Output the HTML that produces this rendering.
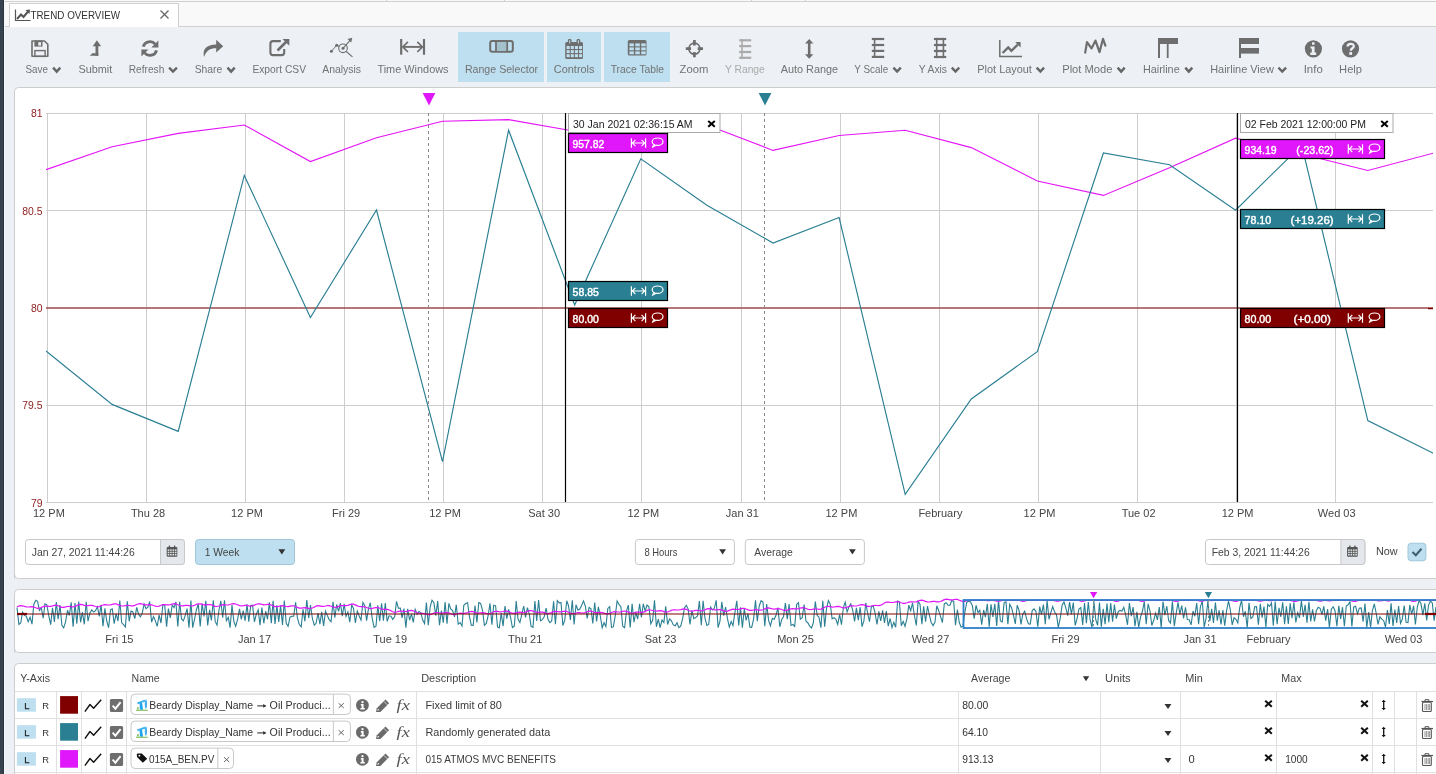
<!DOCTYPE html>
<html><head><meta charset="utf-8"><style>
html,body{margin:0;padding:0;width:1436px;height:774px;overflow:hidden;background:#edf0f5}
svg{display:block;font-family:"Liberation Sans", sans-serif;will-change:transform}
</style></head><body>
<svg width="1436" height="774" viewBox="0 0 1436 774">
<rect x="0" y="0" width="1436" height="774" fill="#edf0f5" stroke="none" stroke-width="1" rx="0" />
<rect x="0" y="0" width="1436" height="26" fill="#f9f9f9" stroke="none" stroke-width="1" rx="0" />
<line x1="0" y1="1.5" x2="1436" y2="1.5" stroke="#d0d0d0" stroke-width="1" />
<line x1="386.5" y1="0" x2="386.5" y2="1" stroke="#d0d0d0" stroke-width="1" />
<line x1="504.5" y1="0" x2="504.5" y2="1" stroke="#d0d0d0" stroke-width="1" />
<line x1="751.5" y1="0" x2="751.5" y2="1" stroke="#d0d0d0" stroke-width="1" />
<line x1="805.5" y1="0" x2="805.5" y2="1" stroke="#d0d0d0" stroke-width="1" />
<line x1="0" y1="26.5" x2="1436" y2="26.5" stroke="#cfcfcf" stroke-width="1" />
<path d="M9.5,26.5 V3.5 H178.5 V26.5" fill="#fff" stroke="#cfcfcf" stroke-width="1" />
<rect x="10" y="25" width="168" height="3" fill="#edf0f5" stroke="none" stroke-width="1" rx="0" />
<rect x="10" y="4" width="168" height="23" fill="#fff" stroke="none" stroke-width="1" rx="0" />
<path d="M15.5,9.5 V20.5 H30.5" fill="none" stroke="#555" stroke-width="1.2" />
<path d="M17,19 L21,14.5 L23.5,17 L28.5,11" fill="none" stroke="#555" stroke-width="2" />
<path d="M25.5,10 L30,9.5 L29.5,14 Z" fill="#555" stroke="none" stroke-width="1" />
<text x="30.5" y="19.3" font-size="11.2" fill="#333" font-weight="normal" text-anchor="start" textLength="89.5" lengthAdjust="spacingAndGlyphs" >TREND OVERVIEW</text>
<path d="M160.5,10.5 L168.5,18.5 M168.5,10.5 L160.5,18.5" fill="none" stroke="#666" stroke-width="1.3" />
<rect x="0" y="0" width="3" height="774" fill="#36434f" stroke="none" stroke-width="1" rx="0" />
<rect x="3" y="0" width="1" height="774" fill="#2a3542" stroke="none" stroke-width="1" rx="0" />
<rect x="4" y="0" width="1" height="774" fill="#f4f6f9" stroke="none" stroke-width="1" rx="0" />
<rect x="458" y="32" width="86" height="50" fill="#bddfef" stroke="none" stroke-width="1" rx="0" />
<rect x="547" y="32" width="54" height="50" fill="#bddfef" stroke="none" stroke-width="1" rx="0" />
<rect x="604" y="32" width="66" height="50" fill="#bddfef" stroke="none" stroke-width="1" rx="0" />
<text x="25.4" y="72.7" font-size="10.6" fill="#727272" font-weight="normal" text-anchor="start" textLength="22.5" lengthAdjust="spacingAndGlyphs" >Save</text>
<path d="M53.1,67.6 L56.7,71.6 L60.3,67.6" fill="none" stroke="#666" stroke-width="2.4" />
<text x="78.4" y="72.7" font-size="10.6" fill="#727272" font-weight="normal" text-anchor="start" textLength="33.9" lengthAdjust="spacingAndGlyphs" >Submit</text>
<text x="128.7" y="72.7" font-size="10.6" fill="#727272" font-weight="normal" text-anchor="start" textLength="35.6" lengthAdjust="spacingAndGlyphs" >Refresh</text>
<path d="M169.1,67.6 L173.0,71.6 L176.9,67.6" fill="none" stroke="#666" stroke-width="2.4" />
<text x="194.7" y="72.7" font-size="10.6" fill="#727272" font-weight="normal" text-anchor="start" textLength="27.6" lengthAdjust="spacingAndGlyphs" >Share</text>
<path d="M227.5,67.6 L231.10000000000002,71.6 L234.70000000000002,67.6" fill="none" stroke="#666" stroke-width="2.4" />
<text x="252.4" y="72.7" font-size="10.6" fill="#727272" font-weight="normal" text-anchor="start" textLength="53.6" lengthAdjust="spacingAndGlyphs" >Export CSV</text>
<text x="322.2" y="72.7" font-size="10.6" fill="#727272" font-weight="normal" text-anchor="start" textLength="38.9" lengthAdjust="spacingAndGlyphs" >Analysis</text>
<text x="377.4" y="72.7" font-size="10.6" fill="#727272" font-weight="normal" text-anchor="start" textLength="71.2" lengthAdjust="spacingAndGlyphs" >Time Windows</text>
<text x="464.9" y="72.7" font-size="10.6" fill="#727272" font-weight="normal" text-anchor="start" textLength="73.2" lengthAdjust="spacingAndGlyphs" >Range Selector</text>
<text x="553.8" y="72.7" font-size="10.6" fill="#727272" font-weight="normal" text-anchor="start" textLength="40.7" lengthAdjust="spacingAndGlyphs" >Controls</text>
<text x="610.7" y="72.7" font-size="10.6" fill="#727272" font-weight="normal" text-anchor="start" textLength="53.4" lengthAdjust="spacingAndGlyphs" >Trace Table</text>
<text x="679.6" y="72.7" font-size="10.6" fill="#727272" font-weight="normal" text-anchor="start" textLength="28.8" lengthAdjust="spacingAndGlyphs" >Zoom</text>
<text x="725.0" y="72.7" font-size="10.6" fill="#aaa" font-weight="normal" text-anchor="start" textLength="39.8" lengthAdjust="spacingAndGlyphs" >Y Range</text>
<text x="780.7" y="72.7" font-size="10.6" fill="#727272" font-weight="normal" text-anchor="start" textLength="57.5" lengthAdjust="spacingAndGlyphs" >Auto Range</text>
<text x="854.3" y="72.7" font-size="10.6" fill="#727272" font-weight="normal" text-anchor="start" textLength="33.9" lengthAdjust="spacingAndGlyphs" >Y Scale</text>
<path d="M893.4,67.6 L897.0999999999999,71.6 L900.8,67.6" fill="none" stroke="#666" stroke-width="2.4" />
<text x="918.7" y="72.7" font-size="10.6" fill="#727272" font-weight="normal" text-anchor="start" textLength="28.3" lengthAdjust="spacingAndGlyphs" >Y Axis</text>
<path d="M951.8000000000001,67.6 L955.5,71.6 L959.1999999999999,67.6" fill="none" stroke="#666" stroke-width="2.4" />
<text x="977.3" y="72.7" font-size="10.6" fill="#727272" font-weight="normal" text-anchor="start" textLength="54.6" lengthAdjust="spacingAndGlyphs" >Plot Layout</text>
<path d="M1036.6999999999998,67.6 L1040.4,71.6 L1044.1000000000001,67.6" fill="none" stroke="#666" stroke-width="2.4" />
<text x="1062.2" y="72.7" font-size="10.6" fill="#727272" font-weight="normal" text-anchor="start" textLength="50.3" lengthAdjust="spacingAndGlyphs" >Plot Mode</text>
<path d="M1117.6,67.6 L1121.15,71.6 L1124.7,67.6" fill="none" stroke="#666" stroke-width="2.4" />
<text x="1142.9" y="72.7" font-size="10.6" fill="#727272" font-weight="normal" text-anchor="start" textLength="36.8" lengthAdjust="spacingAndGlyphs" >Hairline</text>
<path d="M1185.3,67.6 L1188.8000000000002,71.6 L1192.3000000000002,67.6" fill="none" stroke="#666" stroke-width="2.4" />
<text x="1210.2" y="72.7" font-size="10.6" fill="#727272" font-weight="normal" text-anchor="start" textLength="63.6" lengthAdjust="spacingAndGlyphs" >Hairline View</text>
<path d="M1278.3999999999999,67.6 L1282.25,71.6 L1286.1000000000001,67.6" fill="none" stroke="#666" stroke-width="2.4" />
<text x="1303.7" y="72.7" font-size="10.6" fill="#727272" font-weight="normal" text-anchor="start" textLength="19.1" lengthAdjust="spacingAndGlyphs" >Info</text>
<text x="1339.1" y="72.7" font-size="10.6" fill="#727272" font-weight="normal" text-anchor="start" textLength="22.9" lengthAdjust="spacingAndGlyphs" >Help</text>
<path d="M32,41 H44.5 L47.8,44.3 V56.2 H32 Z" fill="none" stroke="#6e6e6e" stroke-width="1.6" stroke-linejoin="round"/>
<rect x="34.4" y="40.5" width="8.1" height="6.1" fill="#6e6e6e" stroke="none" stroke-width="1" rx="0" />
<rect x="38.3" y="42.2" width="2.7" height="3.4" fill="#edf0f5" stroke="none" stroke-width="1" rx="0" />
<rect x="34.9" y="50.6" width="10.2" height="5.8" fill="none" stroke="#6e6e6e" stroke-width="1.4" rx="0" />
<path d="M92.7,46.2 L96.9,40.3 L101.1,46.2 Z" fill="#6e6e6e" stroke="none" stroke-width="1" />
<rect x="95.5" y="46" width="2.8" height="9.7" fill="#6e6e6e" stroke="none" stroke-width="1" rx="0" />
<path d="M89.8,55.7 L92.3,53.2 H98.3 V55.7 Z" fill="#6e6e6e" stroke="none" stroke-width="1" />
<path d="M143.24,46.71 A6.9,6.9 0 0 1 155.19,44.06" fill="none" stroke="#6e6e6e" stroke-width="2.8" />
<path d="M158.4,40.6 V47.6 H151.4 Z" fill="#6e6e6e" stroke="none" stroke-width="1" />
<path d="M156.56,50.29 A6.9,6.9 0 0 1 144.61,52.94" fill="none" stroke="#6e6e6e" stroke-width="2.8" />
<path d="M141.4,56.4 V49.4 H148.4 Z" fill="#6e6e6e" stroke="none" stroke-width="1" />
<path d="M204.2,57 C201.8,49.5 206.5,44.4 216.2,44.4 V39.7 L223.2,46.2 L216.2,52.6 V48.2 C210,48.2 206,50.5 204.2,57 Z" fill="#6e6e6e" stroke="none" stroke-width="1" />
<path d="M280.8,41.1 H273 A2.6,2.6 0 0 0 270.4,43.7 V52.5 A2.6,2.6 0 0 0 273,55.1 H281.6 A2.6,2.6 0 0 0 284.2,52.5 V49" fill="none" stroke="#6e6e6e" stroke-width="2.1" />
<path d="M277.5,50.5 L286,42" fill="none" stroke="#6e6e6e" stroke-width="2.6" />
<path d="M282.5,39 H289.3 V45.8 Z" fill="#6e6e6e" stroke="none" stroke-width="1" />
<circle cx="331.4" cy="51.3" r="1.5" fill="#6e6e6e"/><circle cx="336.7" cy="45.3" r="1.5" fill="#6e6e6e"/>
<path d="M331.4,51.3 L336.7,45.3 L339.5,46.5" fill="none" stroke="#6e6e6e" stroke-width="1" />
<circle cx="343" cy="48.3" r="4.3" fill="none" stroke="#6e6e6e" stroke-width="1.1"/><circle cx="343" cy="48.3" r="1.5" fill="#6e6e6e"/>
<path d="M343,48.3 L350.5,39.8" fill="none" stroke="#6e6e6e" stroke-width="1.1" />
<path d="M347.5,39 L352.3,37.8 L351.2,42.6 Z" fill="#6e6e6e" stroke="none" stroke-width="1" />
<path d="M346.2,51.5 L352.5,56.8" fill="none" stroke="#6e6e6e" stroke-width="1.1" />
<path d="M401.2,39 V54.7 M424,39 V54.7" fill="none" stroke="#6e6e6e" stroke-width="2.2" />
<path d="M403,46.9 H422.2" fill="none" stroke="#6e6e6e" stroke-width="1.9" />
<path d="M407.9,41.8 L402.8,46.9 L407.9,52 M417.3,41.8 L422.4,46.9 L417.3,52" fill="none" stroke="#6e6e6e" stroke-width="1.7" />
<rect x="490.2" y="41" width="22.6" height="10.8" fill="none" stroke="#6e6e6e" stroke-width="2" rx="2" />
<rect x="496.5" y="42" width="10" height="8.8" fill="#a3c0cd" stroke="none" stroke-width="1" rx="0" />
<line x1="496" y1="41" x2="496" y2="51.8" stroke="#6e6e6e" stroke-width="1.8" />
<line x1="507.2" y1="41" x2="507.2" y2="51.8" stroke="#6e6e6e" stroke-width="1.8" />
<rect x="565.2" y="42" width="17.8" height="17" fill="#6e6e6e" stroke="none" stroke-width="1" rx="1.5" />
<rect x="566.6" y="46.0" width="3.1" height="3" fill="#bddfef" stroke="none" stroke-width="1" rx="0" />
<rect x="566.6" y="50.1" width="3.1" height="3" fill="#bddfef" stroke="none" stroke-width="1" rx="0" />
<rect x="566.6" y="54.2" width="3.1" height="3" fill="#bddfef" stroke="none" stroke-width="1" rx="0" />
<rect x="570.75" y="46.0" width="3.1" height="3" fill="#bddfef" stroke="none" stroke-width="1" rx="0" />
<rect x="570.75" y="50.1" width="3.1" height="3" fill="#bddfef" stroke="none" stroke-width="1" rx="0" />
<rect x="570.75" y="54.2" width="3.1" height="3" fill="#bddfef" stroke="none" stroke-width="1" rx="0" />
<rect x="574.9" y="46.0" width="3.1" height="3" fill="#bddfef" stroke="none" stroke-width="1" rx="0" />
<rect x="574.9" y="50.1" width="3.1" height="3" fill="#bddfef" stroke="none" stroke-width="1" rx="0" />
<rect x="574.9" y="54.2" width="3.1" height="3" fill="#bddfef" stroke="none" stroke-width="1" rx="0" />
<rect x="579.0500000000001" y="46.0" width="3.1" height="3" fill="#bddfef" stroke="none" stroke-width="1" rx="0" />
<rect x="579.0500000000001" y="50.1" width="3.1" height="3" fill="#bddfef" stroke="none" stroke-width="1" rx="0" />
<rect x="579.0500000000001" y="54.2" width="3.1" height="3" fill="#bddfef" stroke="none" stroke-width="1" rx="0" />
<rect x="567.9" y="38.9" width="3.6" height="5.2" fill="#6e6e6e" stroke="none" stroke-width="1" rx="1.4" />
<rect x="576.6" y="38.9" width="3.6" height="5.2" fill="#6e6e6e" stroke="none" stroke-width="1" rx="1.4" />
<rect x="569.2" y="40.2" width="1" height="3.2" fill="#bddfef" stroke="none" stroke-width="1" rx="0" />
<rect x="577.9" y="40.2" width="1" height="3.2" fill="#bddfef" stroke="none" stroke-width="1" rx="0" />
<rect x="627.8" y="40" width="18.7" height="15.6" fill="#6e6e6e" stroke="none" stroke-width="1" rx="1.5" />
<rect x="629.4" y="43.4" width="4.5" height="2.9" fill="#bddfef" stroke="none" stroke-width="1" rx="0" />
<rect x="629.4" y="47.4" width="4.5" height="2.9" fill="#bddfef" stroke="none" stroke-width="1" rx="0" />
<rect x="629.4" y="51.4" width="4.5" height="2.9" fill="#bddfef" stroke="none" stroke-width="1" rx="0" />
<rect x="635.3" y="43.4" width="4.5" height="2.9" fill="#bddfef" stroke="none" stroke-width="1" rx="0" />
<rect x="635.3" y="47.4" width="4.5" height="2.9" fill="#bddfef" stroke="none" stroke-width="1" rx="0" />
<rect x="635.3" y="51.4" width="4.5" height="2.9" fill="#bddfef" stroke="none" stroke-width="1" rx="0" />
<rect x="641.1999999999999" y="43.4" width="4.5" height="2.9" fill="#bddfef" stroke="none" stroke-width="1" rx="0" />
<rect x="641.1999999999999" y="47.4" width="4.5" height="2.9" fill="#bddfef" stroke="none" stroke-width="1" rx="0" />
<rect x="641.1999999999999" y="51.4" width="4.5" height="2.9" fill="#bddfef" stroke="none" stroke-width="1" rx="0" />
<circle cx="694.4" cy="48.7" r="5.6" fill="none" stroke="#6e6e6e" stroke-width="1.6"/>
<path d="M694.4,40.1 V45.4 M694.4,52.1 V57.2 M685.8,48.7 H691.1 M697.7,48.7 H703" fill="none" stroke="#6e6e6e" stroke-width="2.7" />
<path d="M742.0,39.2 V58.9" fill="none" stroke="#aaa" stroke-width="1.6" />
<path d="M739.2,40.3 H751.2" fill="none" stroke="#aaa" stroke-width="2.2" />
<path d="M739.2,46.1 H751.2" fill="none" stroke="#aaa" stroke-width="2.2" />
<path d="M739.2,52.0 H751.2" fill="none" stroke="#aaa" stroke-width="2.2" />
<path d="M739.2,57.8 H751.2" fill="none" stroke="#aaa" stroke-width="2.2" />
<path d="M809.2,42.5 V55.2" fill="none" stroke="#6e6e6e" stroke-width="2.6" />
<path d="M805,43.5 L809.2,38.9 L813.4,43.5 Z M805,54.2 L809.2,58.8 L813.4,54.2 Z" fill="#6e6e6e" stroke="none" stroke-width="1" />
<path d="M874.5999999999999,37.9 V58" fill="none" stroke="#6e6e6e" stroke-width="1.6" />
<path d="M871.8,39.0 H884.2" fill="none" stroke="#6e6e6e" stroke-width="2.2" />
<path d="M871.8,45.0 H884.2" fill="none" stroke="#6e6e6e" stroke-width="2.2" />
<path d="M871.8,50.9 H884.2" fill="none" stroke="#6e6e6e" stroke-width="2.2" />
<path d="M871.8,56.9 H884.2" fill="none" stroke="#6e6e6e" stroke-width="2.2" />
<path d="M936.6999999999999,37.9 V58.1" fill="none" stroke="#6e6e6e" stroke-width="1.6" />
<path d="M943.4000000000001,37.9 V58.1" fill="none" stroke="#6e6e6e" stroke-width="1.6" />
<path d="M933.9,39.0 H946.2" fill="none" stroke="#6e6e6e" stroke-width="2.2" />
<path d="M933.9,45.0 H946.2" fill="none" stroke="#6e6e6e" stroke-width="2.2" />
<path d="M933.9,51.0 H946.2" fill="none" stroke="#6e6e6e" stroke-width="2.2" />
<path d="M933.9,57.0 H946.2" fill="none" stroke="#6e6e6e" stroke-width="2.2" />
<path d="M999.8,40 V56.5 H1022" fill="none" stroke="#6e6e6e" stroke-width="1.5" />
<path d="M1002.6,53 L1008.2,47.4 L1011.4,50.8 L1017.8,44.6" fill="none" stroke="#6e6e6e" stroke-width="2.4" />
<path d="M1015.2,42 L1020.6,42 L1020.6,47.4 Z" fill="#6e6e6e" stroke="none" stroke-width="1" />
<path d="M1085.2,52.6 L1087,42.2 L1091.5,48.4 L1095.5,40.6 L1099.5,52.2 L1103,38.8 L1105.4,45.6" fill="none" stroke="#6e6e6e" stroke-width="2.2" stroke-linejoin="round" stroke-linecap="round"/>
<rect x="1158" y="38" width="20" height="6" fill="#6e6e6e" stroke="none" stroke-width="1" rx="0" />
<rect x="1158" y="38" width="2" height="20" fill="#6e6e6e" stroke="none" stroke-width="1" rx="0" />
<rect x="1166.8" y="38" width="1.8" height="20" fill="#6e6e6e" stroke="none" stroke-width="1" rx="0" />
<rect x="1239" y="38" width="20" height="6" fill="#6e6e6e" stroke="none" stroke-width="1" rx="0" />
<rect x="1239" y="48" width="20" height="5.6" fill="#6e6e6e" stroke="none" stroke-width="1" rx="0" />
<rect x="1239" y="38" width="2" height="20" fill="#6e6e6e" stroke="none" stroke-width="1" rx="0" />
<circle cx="1313.4" cy="48.8" r="8.6" fill="#6e6e6e"/>
<rect x="1312" y="42.3" width="2.6" height="2.4" fill="#edf0f5" stroke="none" stroke-width="1" rx="0" />
<path d="M1310.5,46.4 H1314.6 V52.6 H1316.2 V54.9 H1310.3 V52.6 H1311.8 V48.6 H1310.5 Z" fill="#edf0f5" stroke="none" stroke-width="1" />
<circle cx="1350.5" cy="48.8" r="8.6" fill="#6e6e6e"/>
<path d="M1347.6,46.6 C1347.6,43 1353.8,43 1353.8,46.2 C1353.8,48.4 1350.8,48.2 1350.8,50.8" fill="none" stroke="#edf0f5" stroke-width="2.3" />
<rect x="1349.3" y="52.1" width="2.8" height="2.8" fill="#edf0f5" stroke="none" stroke-width="1" rx="0" />
<path d="M14.5,578.5 V91.5 A4,4 0 0 1 18.5,87.5 H1440 V578.5 H18.5 A4,4 0 0 1 14.5,574.5" fill="#fff" stroke="#cdcdcd" stroke-width="1" />
<line x1="47.5" y1="113.5" x2="47.5" y2="502.5" stroke="#cdcdcd" stroke-width="1" />
<line x1="146.5" y1="113.5" x2="146.5" y2="502.5" stroke="#cdcdcd" stroke-width="1" />
<line x1="245.5" y1="113.5" x2="245.5" y2="502.5" stroke="#cdcdcd" stroke-width="1" />
<line x1="344.5" y1="113.5" x2="344.5" y2="502.5" stroke="#cdcdcd" stroke-width="1" />
<line x1="443.5" y1="113.5" x2="443.5" y2="502.5" stroke="#cdcdcd" stroke-width="1" />
<line x1="542.5" y1="113.5" x2="542.5" y2="502.5" stroke="#cdcdcd" stroke-width="1" />
<line x1="641.5" y1="113.5" x2="641.5" y2="502.5" stroke="#cdcdcd" stroke-width="1" />
<line x1="741.5" y1="113.5" x2="741.5" y2="502.5" stroke="#cdcdcd" stroke-width="1" />
<line x1="840.5" y1="113.5" x2="840.5" y2="502.5" stroke="#cdcdcd" stroke-width="1" />
<line x1="939.5" y1="113.5" x2="939.5" y2="502.5" stroke="#cdcdcd" stroke-width="1" />
<line x1="1038.5" y1="113.5" x2="1038.5" y2="502.5" stroke="#cdcdcd" stroke-width="1" />
<line x1="1137.5" y1="113.5" x2="1137.5" y2="502.5" stroke="#cdcdcd" stroke-width="1" />
<line x1="1236.5" y1="113.5" x2="1236.5" y2="502.5" stroke="#cdcdcd" stroke-width="1" />
<line x1="1335.5" y1="113.5" x2="1335.5" y2="502.5" stroke="#cdcdcd" stroke-width="1" />
<line x1="46" y1="113.5" x2="1433" y2="113.5" stroke="#cdcdcd" stroke-width="1" />
<line x1="46" y1="210.5" x2="1433" y2="210.5" stroke="#cdcdcd" stroke-width="1" />
<line x1="46" y1="308" x2="1433" y2="308" stroke="#cdcdcd" stroke-width="1" />
<line x1="46" y1="405.5" x2="1433" y2="405.5" stroke="#cdcdcd" stroke-width="1" />
<line x1="46" y1="502.5" x2="1433" y2="502.5" stroke="#cdcdcd" stroke-width="1" />
<text x="42.5" y="117.2" font-size="10.4" fill="#8b1a1a" font-weight="normal" text-anchor="end" >81</text>
<text x="42.5" y="214.5" font-size="10.4" fill="#8b1a1a" font-weight="normal" text-anchor="end" >80.5</text>
<text x="42.5" y="312.0" font-size="10.4" fill="#8b1a1a" font-weight="normal" text-anchor="end" >80</text>
<text x="42.5" y="409.0" font-size="10.4" fill="#8b1a1a" font-weight="normal" text-anchor="end" >79.5</text>
<text x="42.5" y="506.8" font-size="10.4" fill="#8b1a1a" font-weight="normal" text-anchor="end" >79</text>
<text x="48.9" y="517.0" font-size="11" fill="#444" font-weight="normal" text-anchor="middle" >12 PM</text>
<text x="148.0" y="517.0" font-size="11" fill="#444" font-weight="normal" text-anchor="middle" >Thu 28</text>
<text x="247.0" y="517.0" font-size="11" fill="#444" font-weight="normal" text-anchor="middle" >12 PM</text>
<text x="346.1" y="517.0" font-size="11" fill="#444" font-weight="normal" text-anchor="middle" >Fri 29</text>
<text x="445.1" y="517.0" font-size="11" fill="#444" font-weight="normal" text-anchor="middle" >12 PM</text>
<text x="544.2" y="517.0" font-size="11" fill="#444" font-weight="normal" text-anchor="middle" >Sat 30</text>
<text x="643.3" y="517.0" font-size="11" fill="#444" font-weight="normal" text-anchor="middle" >12 PM</text>
<text x="742.3" y="517.0" font-size="11" fill="#444" font-weight="normal" text-anchor="middle" >Jan 31</text>
<text x="841.4" y="517.0" font-size="11" fill="#444" font-weight="normal" text-anchor="middle" >12 PM</text>
<text x="940.4" y="517.0" font-size="11" fill="#444" font-weight="normal" text-anchor="middle" >February</text>
<text x="1039.5" y="517.0" font-size="11" fill="#444" font-weight="normal" text-anchor="middle" >12 PM</text>
<text x="1138.6" y="517.0" font-size="11" fill="#444" font-weight="normal" text-anchor="middle" >Tue 02</text>
<text x="1237.6" y="517.0" font-size="11" fill="#444" font-weight="normal" text-anchor="middle" >12 PM</text>
<text x="1336.7" y="517.0" font-size="11" fill="#444" font-weight="normal" text-anchor="middle" >Wed 03</text>
<line x1="46" y1="308" x2="1433" y2="308" stroke="#800000" stroke-width="1.6" stroke-opacity="0.65"/>
<line x1="428.5" y1="113" x2="428.5" y2="502" stroke="#888" stroke-width="1" stroke-dasharray="3,3"/>
<line x1="764.5" y1="113" x2="764.5" y2="502" stroke="#888" stroke-width="1" stroke-dasharray="3,3"/>
<path d="M422.7,93 H435.3 L429,105.6 Z" fill="#e016fb" stroke="none" stroke-width="1" />
<path d="M758.7,93 H771.4 L765,105.6 Z" fill="#2a7f93" stroke="none" stroke-width="1" />
<clipPath id="pc"><rect x="46" y="90" width="1387" height="420"/></clipPath>
<polyline points="46.0,169.7 112.1,146.7 178.2,133.4 244.3,125.0 310.4,161.6 376.5,137.8 442.5,121.2 508.6,119.6 574.7,131.3 640.8,123.0 706.9,125.0 773.0,150.4 839.1,135.5 905.2,130.2 971.3,147.6 1037.3,181.0 1103.4,195.4 1169.5,167.8 1235.6,138.2 1301.7,154.0 1367.8,170.5 1433.9,153.0" fill="none" stroke="#e414f6" stroke-width="1.1" clip-path="url(#pc)"/>
<polyline points="46.0,351.0 112.1,404.4 178.2,431.4 244.3,175.4 310.4,317.5 376.5,210.0 442.5,461.6 508.6,130.2 574.7,305.0 640.8,158.8 706.9,205.2 773.0,243.0 839.1,217.5 905.2,494.4 971.3,399.0 1037.3,351.6 1103.4,153.0 1169.5,164.7 1235.6,210.2 1301.7,145.0 1367.8,420.6 1433.9,453.5" fill="none" stroke="#2a7f93" stroke-width="1.15" clip-path="url(#pc)"/>
<line x1="565.5" y1="113" x2="565.5" y2="502" stroke="#000" stroke-width="1.2" />
<line x1="1237.5" y1="113" x2="1237.5" y2="502" stroke="#000" stroke-width="1.2" />
<rect x="568.5" y="113.5" width="151.5" height="19" fill="#fff" stroke="#aaa" stroke-width="1" rx="0" />
<text x="573.0" y="127.5" font-size="11" fill="#222" font-weight="normal" text-anchor="start" textLength="119.6" lengthAdjust="spacingAndGlyphs" >30 Jan 2021 02:36:15 AM</text>
<path d="M708.2,120.9 L714.8,126.7 M714.8,120.9 L708.2,126.7" fill="none" stroke="#000" stroke-width="2" />
<rect x="1240.5" y="113.5" width="152.5" height="19" fill="#fff" stroke="#aaa" stroke-width="1" rx="0" />
<text x="1245.0" y="127.5" font-size="11" fill="#222" font-weight="normal" text-anchor="start" textLength="121.0" lengthAdjust="spacingAndGlyphs" >02 Feb 2021 12:00:00 PM</text>
<path d="M1381.2,120.9 L1387.8,126.7 M1387.8,120.9 L1381.2,126.7" fill="none" stroke="#000" stroke-width="2" />
<rect x="568.5" y="133.5" width="99" height="19" fill="#e016fb" stroke="#000" stroke-width="1.2" rx="0" />
<text x="572.6" y="147.6" font-size="11.5" fill="#fff" font-weight="normal" text-anchor="start" textLength="31.6" lengthAdjust="spacingAndGlyphs" stroke="#fff" stroke-width="0.45">957.82</text>
<path d="M631.4,138.2 V147.8 M645.5999999999999,138.2 V147.8" fill="none" stroke="#fff" stroke-width="1.2" />
<path d="M632.3,143 H644.6999999999999 M635.4,139.8 L632.3,143 L635.4,146.2 M641.5999999999999,139.8 L644.6999999999999,143 L641.5999999999999,146.2" fill="none" stroke="#fff" stroke-width="1.15" />
<ellipse cx="657.5999999999999" cy="141.7" rx="5.4" ry="3.7" fill="none" stroke="#fff" stroke-width="1.2"/>
<path d="M653.5999999999999,144.6 L652.1999999999999,147.6 L656.3999999999999,145.3" fill="#fff" stroke="#fff" stroke-width="0.8" />
<rect x="568.5" y="281.5" width="99" height="19" fill="#2a7f93" stroke="#000" stroke-width="1.2" rx="0" />
<text x="572.6" y="295.6" font-size="11.5" fill="#fff" font-weight="normal" text-anchor="start" textLength="26.2" lengthAdjust="spacingAndGlyphs" stroke="#fff" stroke-width="0.45">58.85</text>
<path d="M631.4,286.2 V295.8 M645.5999999999999,286.2 V295.8" fill="none" stroke="#fff" stroke-width="1.2" />
<path d="M632.3,291 H644.6999999999999 M635.4,287.8 L632.3,291 L635.4,294.2 M641.5999999999999,287.8 L644.6999999999999,291 L641.5999999999999,294.2" fill="none" stroke="#fff" stroke-width="1.15" />
<ellipse cx="657.5999999999999" cy="289.7" rx="5.4" ry="3.7" fill="none" stroke="#fff" stroke-width="1.2"/>
<path d="M653.5999999999999,292.6 L652.1999999999999,295.6 L656.3999999999999,293.3" fill="#fff" stroke="#fff" stroke-width="0.8" />
<rect x="568.5" y="308.5" width="99" height="19" fill="#800000" stroke="#000" stroke-width="1.2" rx="0" />
<text x="572.6" y="322.6" font-size="11.5" fill="#fff" font-weight="normal" text-anchor="start" textLength="26.2" lengthAdjust="spacingAndGlyphs" stroke="#fff" stroke-width="0.45">80.00</text>
<path d="M631.4,313.2 V322.8 M645.5999999999999,313.2 V322.8" fill="none" stroke="#fff" stroke-width="1.2" />
<path d="M632.3,318 H644.6999999999999 M635.4,314.8 L632.3,318 L635.4,321.2 M641.5999999999999,314.8 L644.6999999999999,318 L641.5999999999999,321.2" fill="none" stroke="#fff" stroke-width="1.15" />
<ellipse cx="657.5999999999999" cy="316.7" rx="5.4" ry="3.7" fill="none" stroke="#fff" stroke-width="1.2"/>
<path d="M653.5999999999999,319.6 L652.1999999999999,322.6 L656.3999999999999,320.3" fill="#fff" stroke="#fff" stroke-width="0.8" />
<rect x="1240.5" y="139.5" width="144" height="19" fill="#e016fb" stroke="#000" stroke-width="1.2" rx="0" />
<text x="1244.6" y="153.6" font-size="11.5" fill="#fff" font-weight="normal" text-anchor="start" textLength="32.0" lengthAdjust="spacingAndGlyphs" stroke="#fff" stroke-width="0.45">934.19</text>
<text x="1296.3" y="153.6" font-size="11.5" fill="#fff" font-weight="normal" text-anchor="start" textLength="37.3" lengthAdjust="spacingAndGlyphs" stroke="#fff" stroke-width="0.45">(-23.62)</text>
<path d="M1348.3,144.2 V153.8 M1362.5,144.2 V153.8" fill="none" stroke="#fff" stroke-width="1.2" />
<path d="M1349.2,149 H1361.6000000000001 M1352.3,145.8 L1349.2,149 L1352.3,152.2 M1358.5,145.8 L1361.6000000000001,149 L1358.5,152.2" fill="none" stroke="#fff" stroke-width="1.15" />
<ellipse cx="1374.5" cy="147.7" rx="5.4" ry="3.7" fill="none" stroke="#fff" stroke-width="1.2"/>
<path d="M1370.5,150.6 L1369.1,153.6 L1373.3,151.3" fill="#fff" stroke="#fff" stroke-width="0.8" />
<rect x="1240.5" y="209.5" width="144" height="19" fill="#2a7f93" stroke="#000" stroke-width="1.2" rx="0" />
<text x="1244.6" y="223.6" font-size="11.5" fill="#fff" font-weight="normal" text-anchor="start" textLength="26.6" lengthAdjust="spacingAndGlyphs" stroke="#fff" stroke-width="0.45">78.10</text>
<text x="1290.6" y="223.6" font-size="11.5" fill="#fff" font-weight="normal" text-anchor="start" textLength="43.0" lengthAdjust="spacingAndGlyphs" stroke="#fff" stroke-width="0.45">(+19.26)</text>
<path d="M1348.3,214.2 V223.8 M1362.5,214.2 V223.8" fill="none" stroke="#fff" stroke-width="1.2" />
<path d="M1349.2,219 H1361.6000000000001 M1352.3,215.8 L1349.2,219 L1352.3,222.2 M1358.5,215.8 L1361.6000000000001,219 L1358.5,222.2" fill="none" stroke="#fff" stroke-width="1.15" />
<ellipse cx="1374.5" cy="217.7" rx="5.4" ry="3.7" fill="none" stroke="#fff" stroke-width="1.2"/>
<path d="M1370.5,220.6 L1369.1,223.6 L1373.3,221.3" fill="#fff" stroke="#fff" stroke-width="0.8" />
<rect x="1240.5" y="308.5" width="144" height="19" fill="#800000" stroke="#000" stroke-width="1.2" rx="0" />
<text x="1244.6" y="322.6" font-size="11.5" fill="#fff" font-weight="normal" text-anchor="start" textLength="26.6" lengthAdjust="spacingAndGlyphs" stroke="#fff" stroke-width="0.45">80.00</text>
<text x="1293.5" y="322.6" font-size="11.5" fill="#fff" font-weight="normal" text-anchor="start" textLength="37.5" lengthAdjust="spacingAndGlyphs" stroke="#fff" stroke-width="0.45">(+0.00)</text>
<path d="M1348.3,313.2 V322.8 M1362.5,313.2 V322.8" fill="none" stroke="#fff" stroke-width="1.2" />
<path d="M1349.2,318 H1361.6000000000001 M1352.3,314.8 L1349.2,318 L1352.3,321.2 M1358.5,314.8 L1361.6000000000001,318 L1358.5,321.2" fill="none" stroke="#fff" stroke-width="1.15" />
<ellipse cx="1374.5" cy="316.7" rx="5.4" ry="3.7" fill="none" stroke="#fff" stroke-width="1.2"/>
<path d="M1370.5,319.6 L1369.1,322.6 L1373.3,320.3" fill="#fff" stroke="#fff" stroke-width="0.8" />
<rect x="25.5" y="539.5" width="159" height="25" fill="#fff" stroke="#c8c8c8" stroke-width="1" rx="3" />
<path d="M160.5,539.5 H181.5 A3,3 0 0 1 184.5,542.5 V561.5 A3,3 0 0 1 181.5,564.5 H160.5 Z" fill="#e4e7eb" stroke="#c8c8c8" stroke-width="1" />
<text x="31.7" y="556.1" font-size="11" fill="#444" font-weight="normal" text-anchor="start" textLength="103.0" lengthAdjust="spacingAndGlyphs" >Jan 27, 2021 11:44:26</text>
<rect x="166.7" y="547" width="10.6" height="9.7" fill="#555" stroke="none" stroke-width="1" rx="1" />
<rect x="167.7" y="549.4" width="1.6" height="1.5" fill="#e4e7eb" stroke="none" stroke-width="1" rx="0" />
<rect x="167.7" y="551.6999999999999" width="1.6" height="1.5" fill="#e4e7eb" stroke="none" stroke-width="1" rx="0" />
<rect x="167.7" y="554.0" width="1.6" height="1.5" fill="#e4e7eb" stroke="none" stroke-width="1" rx="0" />
<rect x="170.1" y="549.4" width="1.6" height="1.5" fill="#e4e7eb" stroke="none" stroke-width="1" rx="0" />
<rect x="170.1" y="551.6999999999999" width="1.6" height="1.5" fill="#e4e7eb" stroke="none" stroke-width="1" rx="0" />
<rect x="170.1" y="554.0" width="1.6" height="1.5" fill="#e4e7eb" stroke="none" stroke-width="1" rx="0" />
<rect x="172.5" y="549.4" width="1.6" height="1.5" fill="#e4e7eb" stroke="none" stroke-width="1" rx="0" />
<rect x="172.5" y="551.6999999999999" width="1.6" height="1.5" fill="#e4e7eb" stroke="none" stroke-width="1" rx="0" />
<rect x="172.5" y="554.0" width="1.6" height="1.5" fill="#e4e7eb" stroke="none" stroke-width="1" rx="0" />
<rect x="174.89999999999998" y="549.4" width="1.6" height="1.5" fill="#e4e7eb" stroke="none" stroke-width="1" rx="0" />
<rect x="174.89999999999998" y="551.6999999999999" width="1.6" height="1.5" fill="#e4e7eb" stroke="none" stroke-width="1" rx="0" />
<rect x="174.89999999999998" y="554.0" width="1.6" height="1.5" fill="#e4e7eb" stroke="none" stroke-width="1" rx="0" />
<rect x="168.7" y="545.6" width="1.4" height="2.6" fill="#555" stroke="none" stroke-width="1" rx="0" />
<rect x="173.89999999999998" y="545.6" width="1.4" height="2.6" fill="#555" stroke="none" stroke-width="1" rx="0" />
<rect x="195.5" y="539.5" width="99" height="25" fill="#bddfef" stroke="#9fc7d8" stroke-width="1" rx="3" />
<text x="204.7" y="556.1" font-size="11" fill="#444" font-weight="normal" text-anchor="start" textLength="34.7" lengthAdjust="spacingAndGlyphs" >1 Week</text>
<path d="M278.4,549.2 H285.3 L281.85,554.6 Z" fill="#333" stroke="none" stroke-width="1" />
<rect x="635.4" y="539.5" width="99.0" height="25" fill="#fff" stroke="#c8c8c8" stroke-width="1" rx="3" />
<text x="644.4" y="556.1" font-size="11" fill="#444" font-weight="normal" text-anchor="start" textLength="33.0" lengthAdjust="spacingAndGlyphs" >8 Hours</text>
<path d="M719.2,549.2 H726.0 L722.6,554.6 Z" fill="#333" stroke="none" stroke-width="1" />
<rect x="745.3" y="539.5" width="119.10000000000002" height="25" fill="#fff" stroke="#c8c8c8" stroke-width="1" rx="3" />
<text x="754.3" y="556.1" font-size="11" fill="#444" font-weight="normal" text-anchor="start" textLength="38.4" lengthAdjust="spacingAndGlyphs" >Average</text>
<path d="M849,549.2 H855.8 L852.4,554.6 Z" fill="#333" stroke="none" stroke-width="1" />
<rect x="1205.5" y="539.5" width="159.4000000000001" height="25" fill="#fff" stroke="#c8c8c8" stroke-width="1" rx="3" />
<path d="M1340.9,539.5 H1361.9 A3,3 0 0 1 1364.9,542.5 V561.5 A3,3 0 0 1 1361.9,564.5 H1340.9 Z" fill="#e4e7eb" stroke="#c8c8c8" stroke-width="1" />
<text x="1211.7" y="556.1" font-size="11" fill="#444" font-weight="normal" text-anchor="start" textLength="98.0" lengthAdjust="spacingAndGlyphs" >Feb 3, 2021 11:44:26</text>
<rect x="1347.1000000000001" y="547" width="10.6" height="9.7" fill="#555" stroke="none" stroke-width="1" rx="1" />
<rect x="1348.1000000000001" y="549.4" width="1.6" height="1.5" fill="#e4e7eb" stroke="none" stroke-width="1" rx="0" />
<rect x="1348.1000000000001" y="551.6999999999999" width="1.6" height="1.5" fill="#e4e7eb" stroke="none" stroke-width="1" rx="0" />
<rect x="1348.1000000000001" y="554.0" width="1.6" height="1.5" fill="#e4e7eb" stroke="none" stroke-width="1" rx="0" />
<rect x="1350.5000000000002" y="549.4" width="1.6" height="1.5" fill="#e4e7eb" stroke="none" stroke-width="1" rx="0" />
<rect x="1350.5000000000002" y="551.6999999999999" width="1.6" height="1.5" fill="#e4e7eb" stroke="none" stroke-width="1" rx="0" />
<rect x="1350.5000000000002" y="554.0" width="1.6" height="1.5" fill="#e4e7eb" stroke="none" stroke-width="1" rx="0" />
<rect x="1352.9" y="549.4" width="1.6" height="1.5" fill="#e4e7eb" stroke="none" stroke-width="1" rx="0" />
<rect x="1352.9" y="551.6999999999999" width="1.6" height="1.5" fill="#e4e7eb" stroke="none" stroke-width="1" rx="0" />
<rect x="1352.9" y="554.0" width="1.6" height="1.5" fill="#e4e7eb" stroke="none" stroke-width="1" rx="0" />
<rect x="1355.3000000000002" y="549.4" width="1.6" height="1.5" fill="#e4e7eb" stroke="none" stroke-width="1" rx="0" />
<rect x="1355.3000000000002" y="551.6999999999999" width="1.6" height="1.5" fill="#e4e7eb" stroke="none" stroke-width="1" rx="0" />
<rect x="1355.3000000000002" y="554.0" width="1.6" height="1.5" fill="#e4e7eb" stroke="none" stroke-width="1" rx="0" />
<rect x="1349.1000000000001" y="545.6" width="1.4" height="2.6" fill="#555" stroke="none" stroke-width="1" rx="0" />
<rect x="1354.3000000000002" y="545.6" width="1.4" height="2.6" fill="#555" stroke="none" stroke-width="1" rx="0" />
<text x="1375.9" y="555.2" font-size="11" fill="#444" font-weight="normal" text-anchor="start" textLength="21.7" lengthAdjust="spacingAndGlyphs" >Now</text>
<rect x="1408" y="543.2" width="17.9" height="17.6" fill="#bddfef" stroke="#9fc7d8" stroke-width="1" rx="3" />
<path d="M1412.5,552 L1415.8,555.2 L1421.5,548.8" fill="none" stroke="#3d5f6e" stroke-width="2.1" />
<path d="M14.5,652.5 V593.5 A4,4 0 0 1 18.5,589.5 H1440 V652.5 H18.5 A4,4 0 0 1 14.5,648.5" fill="#fff" stroke="#cdcdcd" stroke-width="1" />
<polyline points="17.0,607.6 18.9,624.4 20.7,623.0 22.6,612.1 24.5,615.4 26.3,616.2 28.2,621.7 30.1,617.2 32.0,624.1 33.8,604.5 35.7,600.2 37.6,601.4 39.4,610.4 41.3,607.9 43.2,618.2 45.0,603.8 46.9,604.8 48.8,615.9 50.7,624.7 52.5,607.8 54.4,622.0 56.3,602.1 58.1,619.2 60.0,605.1 61.9,625.2 63.7,627.8 65.6,621.6 67.5,610.3 69.3,615.5 71.2,602.4 73.1,626.8 75.0,603.1 76.8,623.6 78.7,601.6 80.6,622.3 82.4,612.0 84.3,624.3 86.2,601.8 88.0,621.2 89.9,613.0 91.8,610.0 93.7,612.1 95.5,610.7 97.4,606.7 99.3,616.4 101.1,604.8 103.0,626.2 104.9,608.3 106.7,620.8 108.6,627.6 110.5,609.8 112.3,608.9 114.2,623.7 116.1,613.7 118.0,621.0 119.8,600.5 121.7,622.8 123.6,624.6 125.4,627.0 127.3,601.3 129.2,621.3 131.0,611.1 132.9,612.0 134.8,618.7 136.7,607.4 138.5,614.0 140.4,616.8 142.3,612.9 144.1,604.0 146.0,608.7 147.9,607.1 149.7,601.5 151.6,622.2 153.5,616.5 155.3,620.6 157.2,626.3 159.1,615.0 161.0,623.0 162.8,604.9 164.7,605.0 166.6,626.6 168.4,608.5 170.3,618.0 172.2,605.0 174.0,607.6 175.9,601.9 177.8,626.5 179.7,601.8 181.5,619.0 183.4,620.8 185.3,615.1 187.1,608.6 189.0,627.6 190.9,600.6 192.7,627.6 194.6,618.9 196.5,609.5 198.3,603.9 200.2,626.4 202.1,603.6 204.0,616.5 205.8,600.9 207.7,625.4 209.6,609.8 211.4,620.5 213.3,600.3 215.2,621.4 217.0,625.2 218.9,610.7 220.8,600.9 222.7,617.6 224.5,600.2 226.4,620.7 228.3,617.4 230.1,627.7 232.0,605.1 233.9,621.8 235.7,626.2 237.6,619.3 239.5,608.8 241.3,619.4 243.2,610.6 245.1,620.8 247.0,604.4 248.8,621.6 250.7,605.4 252.6,605.1 254.4,621.9 256.3,614.3 258.2,609.9 260.0,625.2 261.9,607.6 263.8,623.3 265.7,611.1 267.5,619.3 269.4,602.3 271.3,623.3 273.1,600.9 275.0,623.9 276.9,605.2 278.7,622.0 280.6,605.6 282.5,624.9 284.3,600.6 286.2,623.3 288.1,626.4 290.0,617.2 291.8,616.2 293.7,616.2 295.6,602.2 297.4,617.8 299.3,624.5 301.2,626.8 303.0,609.2 304.9,621.3 306.8,600.1 308.7,617.9 310.5,605.2 312.4,618.5 314.3,625.1 316.1,623.3 318.0,613.2 319.9,624.1 321.7,611.9 323.6,625.9 325.5,611.1 327.3,615.5 329.2,619.6 331.1,621.7 333.0,601.8 334.8,617.7 336.7,604.5 338.6,611.4 340.4,603.2 342.3,616.2 344.2,603.8 346.0,616.5 347.9,611.9 349.8,622.1 351.7,604.8 353.5,608.4 355.4,622.9 357.3,611.0 359.1,615.7 361.0,620.2 362.9,602.5 364.7,605.4 366.6,620.7 368.5,608.7 370.3,602.7 372.2,618.4 374.1,627.4 376.0,626.2 377.8,605.4 379.7,621.3 381.6,603.2 383.4,620.6 385.3,603.0 387.2,621.4 389.0,615.8 390.9,616.2 392.8,619.4 394.7,616.5 396.5,601.3 398.4,608.2 400.3,608.1 402.1,617.8 404.0,608.5 405.9,627.7 407.7,608.8 409.6,620.2 411.5,613.9 413.3,622.3 415.2,609.4 417.1,614.3 419.0,611.4 420.8,612.5 422.7,620.1 424.6,623.6 426.4,602.5 428.3,625.1 430.2,606.8 432.0,600.2 433.9,602.8 435.8,615.6 437.7,601.1 439.5,625.3 441.4,610.5 443.3,622.7 445.1,602.0 447.0,623.6 448.9,603.3 450.7,609.0 452.6,610.6 454.5,616.9 456.3,604.7 458.2,624.1 460.1,622.5 462.0,626.0 463.8,605.3 465.7,603.5 467.6,602.7 469.4,616.3 471.3,625.2 473.2,625.3 475.0,605.5 476.9,622.4 478.8,602.4 480.7,603.7 482.5,610.3 484.4,625.4 486.3,623.4 488.1,616.0 490.0,603.4 491.9,624.6 493.7,605.2 495.6,605.8 497.5,626.9 499.3,627.8 501.2,613.2 503.1,626.2 505.0,606.0 506.8,618.7 508.7,609.3 510.6,617.6 512.4,627.5 514.3,626.2 516.2,601.1 518.0,619.0 519.9,622.5 521.8,614.3 523.7,606.0 525.5,617.5 527.4,607.7 529.3,614.2 531.1,626.4 533.0,627.3 534.9,601.0 536.7,621.0 538.6,600.0 540.5,620.9 542.3,619.7 544.2,616.8 546.1,608.2 548.0,619.3 549.8,622.7 551.7,621.0 553.6,601.2 555.4,624.1 557.3,600.6 559.2,602.9 561.0,602.7 562.9,625.5 564.8,619.8 566.7,600.7 568.5,605.7 570.4,620.0 572.3,600.2 574.1,624.4 576.0,604.7 577.9,610.0 579.7,609.3 581.6,605.4 583.5,600.9 585.3,606.0 587.2,618.4 589.1,607.4 591.0,608.9 592.8,623.4 594.7,602.6 596.6,621.5 598.4,606.9 600.3,616.0 602.2,627.7 604.0,622.7 605.9,626.6 607.8,608.4 609.7,606.6 611.5,627.5 613.4,626.7 615.3,615.3 617.1,601.0 619.0,604.4 620.9,606.7 622.7,626.2 624.6,627.7 626.5,611.0 628.3,605.1 630.2,627.4 632.1,603.7 634.0,622.1 635.8,612.5 637.7,619.0 639.6,603.7 641.4,617.3 643.3,603.8 645.2,611.0 647.0,605.1 648.9,606.8 650.8,623.8 652.7,620.0 654.5,600.4 656.4,626.8 658.3,619.1 660.1,627.6 662.0,620.1 663.9,622.6 665.7,606.4 667.6,624.5 669.5,619.0 671.3,620.6 673.2,624.7 675.1,625.9 677.0,622.7 678.8,627.7 680.7,626.2 682.6,618.9 684.4,608.0 686.3,605.4 688.2,609.1 690.0,624.5 691.9,610.4 693.8,618.7 695.7,617.6 697.5,616.0 699.4,601.0 701.3,625.3 703.1,600.7 705.0,618.3 706.9,625.4 708.7,624.5 710.6,607.0 712.5,610.0 714.3,608.3 716.2,600.4 718.1,627.6 720.0,620.8 721.8,601.8 723.7,615.7 725.6,607.0 727.4,618.4 729.3,627.0 731.2,621.5 733.0,625.6 734.9,612.7 736.8,600.8 738.7,625.4 740.5,607.4 742.4,627.6 744.3,608.5 746.1,620.3 748.0,613.7 749.9,627.2 751.7,627.4 753.6,619.1 755.5,600.4 757.3,621.2 759.2,606.2 761.1,600.7 763.0,602.0 764.8,626.2 766.7,604.1 768.6,620.3 770.4,625.8 772.3,618.5 774.2,619.3 776.0,615.3 777.9,607.6 779.8,626.8 781.7,619.5 783.5,616.7 785.4,603.0 787.3,619.1 789.1,604.0 791.0,625.4 792.9,624.5 794.7,626.4 796.6,604.6 798.5,602.7 800.3,619.3 802.2,617.8 804.1,604.5 806.0,621.3 807.8,622.7 809.7,626.1 811.6,627.9 813.4,622.3 815.3,601.6 817.2,615.5 819.0,617.2 820.9,627.7 822.8,600.7 824.7,626.7 826.5,608.5 828.4,600.5 830.3,604.3 832.1,618.8 834.0,617.6 835.9,619.4 837.7,624.4 839.6,614.6 841.5,624.7 843.3,607.8 845.2,602.1 847.1,612.0 849.0,606.7 850.8,603.8 852.7,610.1 854.6,621.5 856.4,607.9 858.3,620.2 860.2,607.2 862.0,626.6 863.9,620.9 865.8,602.8 867.7,613.6 869.5,621.7 871.4,606.5 873.3,605.9 875.1,613.3 877.0,624.3 878.9,611.4 880.7,621.0 882.6,610.4 884.5,622.9 886.3,611.0 888.2,626.0 890.1,618.5 892.0,627.4 893.8,622.4 895.7,627.3 897.6,601.0 899.4,601.8 901.3,625.8 903.2,621.4 905.0,626.3 906.9,618.8 908.8,605.2 910.7,610.8 912.5,602.8 914.4,615.5 916.3,625.5 918.1,601.6 920.0,604.2 921.9,624.1 923.7,606.4 925.6,621.7 927.5,606.0 929.3,615.0 931.2,622.5 933.1,625.6 935.0,622.1 936.8,605.7 938.7,610.7 940.6,616.6 942.4,622.7 944.3,603.8 946.2,602.7 948.0,605.2 949.9,605.3 951.8,600.5 953.7,601.4 955.5,625.3 957.4,609.6 959.3,622.5 961.1,627.2 963.0,625.9 964.9,611.9 966.7,602.5 968.6,601.0 970.5,601.9 972.3,605.4 974.2,618.7 976.1,605.3 978.0,612.6 979.8,610.1 981.7,624.7 983.6,610.0 985.4,617.1 987.3,603.8 989.2,626.7 991.0,604.4 992.9,616.9 994.8,603.9 996.7,626.0 998.5,600.1 1000.4,620.9 1002.3,621.9 1004.1,602.6 1006.0,601.8 1007.9,624.2 1009.7,604.4 1011.6,607.8 1013.5,615.3 1015.3,624.0 1017.2,605.2 1019.1,610.6 1021.0,624.4 1022.8,614.2 1024.7,611.1 1026.6,618.9 1028.4,623.7 1030.3,624.1 1032.2,610.6 1034.0,608.8 1035.9,611.3 1037.8,626.7 1039.7,606.6 1041.5,614.6 1043.4,604.6 1045.3,624.3 1047.1,600.6 1049.0,619.3 1050.9,612.4 1052.7,606.6 1054.6,612.1 1056.5,614.6 1058.3,627.4 1060.2,618.5 1062.1,605.3 1064.0,601.9 1065.8,607.8 1067.7,615.7 1069.6,602.2 1071.4,614.4 1073.3,602.6 1075.2,625.4 1077.0,618.9 1078.9,609.0 1080.8,607.5 1082.7,624.9 1084.5,603.0 1086.4,623.3 1088.3,602.1 1090.1,619.5 1092.0,627.7 1093.9,601.2 1095.7,619.5 1097.6,625.4 1099.5,602.6 1101.3,626.8 1103.2,608.9 1105.1,624.1 1107.0,603.5 1108.8,622.2 1110.7,603.1 1112.6,621.8 1114.4,604.6 1116.3,618.7 1118.2,611.7 1120.0,610.4 1121.9,611.1 1123.8,607.4 1125.7,615.2 1127.5,624.8 1129.4,603.1 1131.3,616.1 1133.1,607.1 1135.0,626.2 1136.9,611.9 1138.7,627.2 1140.6,616.9 1142.5,611.0 1144.3,601.5 1146.2,624.2 1148.1,603.9 1150.0,611.2 1151.8,625.5 1153.7,620.3 1155.6,613.1 1157.4,619.8 1159.3,607.0 1161.2,627.6 1163.0,601.5 1164.9,615.2 1166.8,606.2 1168.7,620.7 1170.5,623.1 1172.4,601.4 1174.3,626.2 1176.1,613.9 1178.0,602.4 1179.9,614.3 1181.7,605.5 1183.6,618.3 1185.5,607.3 1187.3,619.5 1189.2,619.8 1191.1,624.9 1193.0,611.0 1194.8,616.4 1196.7,603.1 1198.6,624.1 1200.4,606.6 1202.3,601.1 1204.2,626.9 1206.0,618.6 1207.9,601.0 1209.8,621.1 1211.7,608.9 1213.5,623.0 1215.4,602.5 1217.3,620.7 1219.1,610.2 1221.0,624.5 1222.9,610.0 1224.7,625.7 1226.6,610.7 1228.5,601.1 1230.3,609.6 1232.2,624.9 1234.1,617.8 1236.0,619.3 1237.8,622.9 1239.7,607.6 1241.6,600.2 1243.4,616.8 1245.3,611.2 1247.2,627.8 1249.0,602.7 1250.9,618.5 1252.8,616.9 1254.7,606.8 1256.5,606.6 1258.4,624.8 1260.3,603.8 1262.1,617.6 1264.0,606.6 1265.9,627.1 1267.7,604.5 1269.6,606.4 1271.5,602.9 1273.3,625.7 1275.2,601.5 1277.1,624.3 1279.0,607.8 1280.8,616.8 1282.7,602.2 1284.6,624.1 1286.4,606.3 1288.3,624.0 1290.2,603.4 1292.0,618.3 1293.9,602.3 1295.8,622.5 1297.7,612.6 1299.5,617.9 1301.4,600.6 1303.3,616.8 1305.1,604.9 1307.0,622.8 1308.9,601.7 1310.7,621.5 1312.6,609.3 1314.5,621.3 1316.3,610.8 1318.2,607.2 1320.1,608.3 1322.0,614.7 1323.8,606.4 1325.7,620.7 1327.6,609.1 1329.4,627.4 1331.3,609.2 1333.2,606.7 1335.0,610.7 1336.9,626.1 1338.8,605.8 1340.7,618.9 1342.5,607.2 1344.4,626.2 1346.3,605.8 1348.1,604.8 1350.0,601.7 1351.9,626.5 1353.7,606.9 1355.6,606.3 1357.5,613.8 1359.3,608.2 1361.2,607.9 1363.1,621.7 1365.0,603.5 1366.8,627.3 1368.7,612.1 1370.6,627.1 1372.4,610.5 1374.3,603.8 1376.2,613.4 1378.0,624.4 1379.9,616.8 1381.8,619.1 1383.7,620.7 1385.5,627.0 1387.4,610.0 1389.3,623.9 1391.1,603.4 1393.0,625.9 1394.9,609.5 1396.7,623.0 1398.6,606.1 1400.5,623.3 1402.3,619.1 1404.2,605.5 1406.1,622.2 1408.0,622.5 1409.8,604.9 1411.7,614.4 1413.6,605.8 1415.4,624.5 1417.3,607.0 1419.2,600.4 1421.0,603.8 1422.9,615.2 1424.8,603.3 1426.7,620.4 1428.5,605.3 1430.4,601.0 1432.3,602.9 1434.1,620.6 1436.0,607.1" fill="none" stroke="#2a7f93" stroke-width="1.1"/>
<polyline points="17.0,606.9 18.9,606.0 20.7,605.6 22.6,605.8 24.5,606.4 26.3,606.9 28.2,607.0 30.1,606.8 32.0,606.7 33.8,607.1 35.7,607.8 37.6,608.3 39.4,608.2 41.3,607.5 43.2,606.6 45.0,606.1 46.9,606.1 48.8,606.4 50.7,606.3 52.5,605.9 54.4,605.4 56.3,605.2 58.1,605.8 60.0,606.6 61.9,607.3 63.7,607.3 65.6,606.9 67.5,606.5 69.3,606.4 71.2,606.7 73.1,606.8 75.0,606.5 76.8,605.6 78.7,604.7 80.6,604.4 82.4,604.7 84.3,605.3 86.2,605.6 88.0,605.6 89.9,605.3 91.8,605.3 93.7,605.8 95.5,606.5 97.4,606.9 99.3,606.6 101.1,605.8 103.0,605.0 104.9,604.7 106.7,604.8 108.6,605.0 110.5,604.8 112.3,604.3 114.2,603.8 116.1,603.9 118.0,604.6 119.8,605.4 121.7,606.0 123.6,606.0 125.4,605.6 127.3,605.3 129.2,605.5 131.0,605.8 132.9,605.9 134.8,605.4 136.7,604.5 138.5,603.8 140.4,603.7 142.3,604.1 144.1,604.7 146.0,604.9 147.9,604.8 149.7,604.6 151.6,604.8 153.5,605.5 155.3,606.2 157.2,606.5 159.1,606.1 161.0,605.3 162.8,604.7 164.7,604.6 166.6,604.8 168.4,604.9 170.3,604.6 172.2,604.0 174.0,603.6 175.9,603.9 177.8,604.7 179.7,605.5 181.5,605.9 183.4,605.8 185.3,605.4 187.1,605.3 189.0,605.6 190.9,606.0 192.7,605.9 194.6,605.3 196.5,604.4 198.3,603.8 200.2,603.8 202.1,604.3 204.0,604.8 205.8,604.8 207.7,604.6 209.6,604.5 211.4,604.8 213.3,605.6 215.2,606.3 217.0,606.5 218.9,606.0 220.8,605.2 222.7,604.7 224.5,604.8 226.4,605.0 228.3,604.9 230.1,604.5 232.0,603.8 233.9,603.6 235.7,604.0 237.6,604.8 239.5,605.6 241.3,605.8 243.2,605.6 245.1,605.3 247.0,605.4 248.8,605.8 250.7,606.1 252.6,605.9 254.4,605.1 256.3,604.2 258.2,603.8 260.0,603.9 261.9,604.4 263.8,604.8 265.7,604.7 267.5,604.4 269.4,604.4 271.3,605.0 273.1,605.9 275.0,606.6 276.9,606.7 278.7,606.3 280.6,605.8 282.5,605.7 284.3,606.1 286.2,606.5 288.1,606.6 290.0,606.2 291.8,605.8 293.7,605.8 295.6,606.5 297.4,607.4 299.3,608.1 301.2,608.2 303.0,607.9 304.9,607.7 306.8,607.9 308.7,608.3 310.5,608.5 312.4,608.0 314.3,607.1 316.1,606.1 318.0,605.7 319.9,605.9 321.7,606.3 323.6,606.3 325.5,606.0 327.3,605.6 329.2,605.7 331.1,606.2 333.0,607.0 334.8,607.4 336.7,607.1 338.6,606.4 340.4,605.7 342.3,605.5 344.2,605.7 346.0,605.7 347.9,605.4 349.8,604.6 351.7,604.1 353.5,604.2 355.4,604.9 357.3,605.9 359.1,606.5 361.0,606.7 362.9,606.6 364.7,606.8 366.6,607.5 368.5,608.3 370.3,608.7 372.2,608.5 374.1,607.9 376.0,607.5 377.8,607.7 379.7,608.3 381.6,609.0 383.4,609.3 385.3,609.3 387.2,609.3 389.0,609.8 390.9,610.8 392.8,611.8 394.7,612.3 396.5,612.0 398.4,611.4 400.3,611.0 402.1,611.1 404.0,611.4 405.9,611.5 407.7,611.1 409.6,610.6 411.5,610.3 413.3,610.8 415.2,611.7 417.1,612.7 419.0,613.3 420.8,613.3 422.7,613.3 424.6,613.6 426.4,614.2 428.3,614.7 430.2,614.7 432.0,614.0 433.9,613.1 435.8,612.5 437.7,612.5 439.5,612.9 441.4,613.1 443.3,613.0 445.1,612.6 447.0,612.5 448.9,612.9 450.7,613.7 452.6,614.5 454.5,614.6 456.3,614.1 458.2,613.5 460.1,613.2 462.0,613.3 463.8,613.4 465.7,613.2 467.6,612.5 469.4,611.7 471.3,611.3 473.2,611.7 475.0,612.4 476.9,613.0 478.8,613.1 480.7,612.8 482.5,612.6 484.4,612.9 486.3,613.4 488.1,613.8 490.0,613.5 491.9,612.7 493.7,611.8 495.6,611.3 497.5,611.4 499.3,611.8 501.2,611.8 503.1,611.5 505.0,611.1 506.8,611.1 508.7,611.7 510.6,612.6 512.4,613.3 514.3,613.3 516.2,612.8 518.0,612.3 519.9,612.2 521.8,612.4 523.7,612.5 525.5,612.2 527.4,611.4 529.3,610.7 531.1,610.6 533.0,611.1 534.9,611.8 536.7,612.3 538.6,612.3 540.5,612.1 542.3,612.1 544.2,612.6 546.1,613.3 548.0,613.6 549.8,613.2 551.7,612.4 553.6,611.6 555.4,611.4 557.3,611.6 559.2,611.9 561.0,611.9 562.9,611.5 564.8,611.2 566.7,611.4 568.5,612.2 570.4,613.1 572.3,613.6 574.1,613.5 576.0,613.0 577.9,612.6 579.7,612.7 581.6,613.0 583.5,613.0 585.3,612.5 587.2,611.7 589.1,611.1 591.0,611.1 592.8,611.7 594.7,612.4 596.6,612.7 598.4,612.6 600.3,612.4 602.2,612.6 604.0,613.1 605.9,613.8 607.8,613.9 609.7,613.3 611.5,612.5 613.4,611.8 615.3,611.7 617.1,611.9 619.0,612.0 620.9,611.8 622.7,611.3 624.6,611.0 626.5,611.3 628.3,612.1 630.2,612.8 632.1,613.1 634.0,612.8 635.8,612.2 637.7,612.0 639.6,612.1 641.4,612.3 643.3,612.1 645.2,611.4 647.0,610.4 648.9,609.9 650.8,610.0 652.7,610.5 654.5,611.0 656.4,611.1 658.3,610.8 660.1,610.7 662.0,610.9 663.9,611.6 665.7,612.1 667.6,612.0 669.5,611.3 671.3,610.4 673.2,609.8 675.1,609.8 677.0,610.0 678.8,610.0 680.7,609.6 682.6,609.1 684.4,608.9 686.3,609.4 688.2,610.3 690.0,611.0 691.9,611.1 693.8,610.8 695.7,610.4 697.5,610.3 699.4,610.6 701.3,610.8 703.1,610.6 705.0,609.8 706.9,608.9 708.7,608.6 710.6,608.9 712.5,609.5 714.3,609.9 716.2,609.9 718.1,609.7 720.0,609.7 721.8,610.1 723.7,610.9 725.6,611.3 727.4,611.1 729.3,610.4 731.2,609.6 733.0,609.2 734.9,609.4 736.8,609.5 738.7,609.4 740.5,608.9 742.4,608.4 744.3,608.4 746.1,609.0 748.0,609.9 749.9,610.4 751.7,610.4 753.6,610.0 755.5,609.7 757.3,609.8 759.2,610.1 761.1,610.2 763.0,609.8 764.8,608.9 766.7,608.1 768.6,607.9 770.4,608.3 772.3,608.8 774.2,609.1 776.0,608.9 777.9,608.7 779.8,608.8 781.7,609.5 783.5,610.2 785.4,610.6 787.3,610.2 789.1,609.4 791.0,608.8 792.9,608.6 794.7,608.8 796.6,608.9 798.5,608.6 800.3,608.1 802.2,607.6 804.1,607.8 806.0,608.5 807.8,609.3 809.7,609.7 811.6,609.5 813.4,609.1 815.3,608.8 817.2,609.0 819.0,609.3 820.9,609.1 822.8,608.4 824.7,607.3 826.5,606.5 828.4,606.4 830.3,606.7 832.1,607.1 834.0,607.0 835.9,606.7 837.7,606.4 839.6,606.6 841.5,607.2 843.3,607.8 845.2,607.9 847.1,607.3 849.0,606.5 850.8,605.9 852.7,605.8 854.6,606.0 856.4,606.0 858.3,605.5 860.2,604.9 862.0,604.6 863.9,604.9 865.8,605.6 867.7,606.3 869.5,606.4 871.4,606.0 873.3,605.5 875.1,605.3 877.0,605.5 878.9,605.6 880.7,605.2 882.6,604.2 884.5,603.0 886.3,602.2 888.2,602.1 890.1,602.4 892.0,602.5 893.8,602.3 895.7,601.9 897.6,601.7 899.4,602.0 901.3,602.8 903.2,603.4 905.0,603.4 906.9,602.8 908.8,602.1 910.7,601.8 912.5,601.8 914.4,602.0 916.3,601.8 918.1,601.1 920.0,600.4 921.9,600.2 923.7,600.6 925.6,601.4 927.5,601.9 929.3,602.0 931.2,601.6 933.1,601.3 935.0,601.4 936.8,601.8 938.7,601.9 940.6,601.5 942.4,600.6 944.3,599.6 946.2,599.2 948.0,599.4 949.9,599.8 951.8,599.9 953.7,599.7 955.5,599.4 957.4,599.4 959.3,600.3 961.1,600.9 963.0,601.4 964.9,601.3 966.7,600.7 968.6,600.3 970.5,600.3 972.3,600.3 974.2,600.3 976.1,600.3 978.0,600.3 979.8,600.3 981.7,600.3 983.6,600.3 985.4,600.3 987.3,600.6 989.2,600.6 991.0,600.3 992.9,600.3 994.8,600.6 996.7,601.1 998.5,601.2 1000.4,600.8 1002.3,600.3 1004.1,600.3 1006.0,600.3 1007.9,600.3 1009.7,600.3 1011.6,600.3 1013.5,600.3 1015.3,600.3 1017.2,600.3 1019.1,600.3 1021.0,601.0 1022.8,601.4 1024.7,601.1 1026.6,600.5 1028.4,600.3 1030.3,600.3 1032.2,600.3 1034.0,600.3 1035.9,600.3 1037.8,600.3 1039.7,600.3 1041.5,600.3 1043.4,600.3 1045.3,600.3 1047.1,600.5 1049.0,600.4 1050.9,600.3 1052.7,600.3 1054.6,600.7 1056.5,601.2 1058.3,601.2 1060.2,600.6 1062.1,600.3 1064.0,600.3 1065.8,600.3 1067.7,600.3 1069.6,600.3 1071.4,600.3 1073.3,600.3 1075.2,600.3 1077.0,600.3 1078.9,600.4 1080.8,601.1 1082.7,601.4 1084.5,601.0 1086.4,600.4 1088.3,600.3 1090.1,600.3 1092.0,600.4 1093.9,600.3 1095.7,600.3 1097.6,600.3 1099.5,600.3 1101.3,600.3 1103.2,600.3 1105.1,600.3 1107.0,600.4 1108.8,600.3 1110.7,600.3 1112.6,600.3 1114.4,600.9 1116.3,601.3 1118.2,601.2 1120.0,600.4 1121.9,600.3 1123.8,600.3 1125.7,600.3 1127.5,600.3 1129.4,600.3 1131.3,600.3 1133.1,600.3 1135.0,600.3 1136.9,600.3 1138.7,600.5 1140.6,601.2 1142.5,601.3 1144.3,600.8 1146.2,600.3 1148.1,600.3 1150.0,600.4 1151.8,600.5 1153.7,600.3 1155.6,600.3 1157.4,600.3 1159.3,600.3 1161.2,600.3 1163.0,600.3 1164.9,600.3 1166.8,600.3 1168.7,600.3 1170.5,600.3 1172.4,600.5 1174.3,601.1 1176.1,601.4 1178.0,601.1 1179.9,600.3 1181.7,600.3 1183.6,600.3 1185.5,600.3 1187.3,600.3 1189.2,600.3 1191.1,600.3 1193.0,600.3 1194.8,600.3 1196.7,600.3 1198.6,600.7 1200.4,601.2 1202.3,601.1 1204.2,600.6 1206.0,600.3 1207.9,600.3 1209.8,600.5 1211.7,600.6 1213.5,600.3 1215.4,600.3 1217.3,600.3 1219.1,600.3 1221.0,600.3 1222.9,600.3 1224.7,600.3 1226.6,600.3 1228.5,600.3 1230.3,600.3 1232.2,600.6 1234.1,601.2 1236.0,601.4 1237.8,601.0 1239.7,600.3 1241.6,600.3 1243.4,600.3 1245.3,600.3 1247.2,600.3 1249.0,600.3 1250.9,600.3 1252.8,600.3 1254.7,600.3 1256.5,600.3 1258.4,600.8 1260.3,601.2 1262.1,601.0 1264.0,600.5 1265.9,600.3 1267.7,600.4 1269.6,600.7 1271.5,600.6 1273.3,600.3 1275.2,600.3 1277.1,600.3 1279.0,600.3 1280.8,600.3 1282.7,600.3 1284.6,600.3 1286.4,600.3 1288.3,600.3 1290.2,600.3 1292.0,600.8 1293.9,601.4 1295.8,601.4 1297.7,600.8 1299.5,600.3 1301.4,600.3 1303.3,600.3 1305.1,600.3 1307.0,600.3 1308.9,600.3 1310.7,600.3 1312.6,600.3 1314.5,600.3 1316.3,600.3 1318.2,600.9 1320.1,601.1 1322.0,600.8 1323.8,600.4 1325.7,600.3 1327.6,600.6 1329.4,600.8 1331.3,600.6 1333.2,600.3 1335.0,600.3 1336.9,600.3 1338.8,600.3 1340.7,600.3 1342.5,600.3 1344.4,600.3 1346.3,600.3 1348.1,600.3 1350.0,600.3 1351.9,600.9 1353.7,601.5 1355.6,601.3 1357.5,600.6 1359.3,600.3 1361.2,600.3 1363.1,600.3 1365.0,600.3 1366.8,600.3 1368.7,600.3 1370.6,600.3 1372.4,600.3 1374.3,600.3 1376.2,600.3 1378.0,600.9 1379.9,601.0 1381.8,600.6 1383.7,600.3 1385.5,600.4 1387.4,600.8 1389.3,600.9 1391.1,600.5 1393.0,600.3 1394.9,600.3 1396.7,600.3 1398.6,600.3 1400.5,600.3 1402.3,600.3 1404.2,600.3 1406.1,600.3 1408.0,600.3 1409.8,600.3 1411.7,601.1 1413.6,601.5 1415.4,601.2 1417.3,600.5 1419.2,600.3 1421.0,600.3 1422.9,600.3 1424.8,600.3 1426.7,600.3 1428.5,600.3 1430.4,600.3 1432.3,600.3 1434.1,600.3 1436.0,600.4" fill="none" stroke="#e016fb" stroke-width="1.2"/>
<line x1="17" y1="614" x2="1436" y2="614" stroke="rgba(128,0,0,0.5)" stroke-width="2" />
<line x1="17" y1="614" x2="27" y2="614" stroke="#800000" stroke-width="2.2" />
<line x1="1428" y1="308.6" x2="1433" y2="308.6" stroke="#800000" stroke-width="1.3" />
<line x1="1425" y1="614" x2="1436" y2="614" stroke="#800000" stroke-width="2.2" />
<rect x="963.5" y="600" width="480" height="28" fill="none" stroke="#2f7fc8" stroke-width="1.8" rx="0" />
<path d="M1090,592 H1097.2 L1093.6,598.3 Z" fill="#e016fb" stroke="none" stroke-width="1" />
<path d="M1204.8,592 H1212 L1208.4,598.3 Z" fill="#2a7f93" stroke="none" stroke-width="1" />
<line x1="1093.5" y1="600" x2="1093.5" y2="628" stroke="#888" stroke-width="1" stroke-dasharray="2,2"/>
<line x1="1208.5" y1="600" x2="1208.5" y2="628" stroke="#888" stroke-width="1" stroke-dasharray="2,2"/>
<text x="119.4" y="642.7" font-size="11" fill="#444" font-weight="normal" text-anchor="middle" >Fri 15</text>
<text x="254.5" y="642.7" font-size="11" fill="#444" font-weight="normal" text-anchor="middle" >Jan 17</text>
<text x="390.2" y="642.7" font-size="11" fill="#444" font-weight="normal" text-anchor="middle" >Tue 19</text>
<text x="525.2" y="642.7" font-size="11" fill="#444" font-weight="normal" text-anchor="middle" >Thu 21</text>
<text x="660.6" y="642.7" font-size="11" fill="#444" font-weight="normal" text-anchor="middle" >Sat 23</text>
<text x="795.5" y="642.7" font-size="11" fill="#444" font-weight="normal" text-anchor="middle" >Mon 25</text>
<text x="930.5" y="642.7" font-size="11" fill="#444" font-weight="normal" text-anchor="middle" >Wed 27</text>
<text x="1065.5" y="642.7" font-size="11" fill="#444" font-weight="normal" text-anchor="middle" >Fri 29</text>
<text x="1200.0" y="642.7" font-size="11" fill="#444" font-weight="normal" text-anchor="middle" >Jan 31</text>
<text x="1268.5" y="642.7" font-size="11" fill="#444" font-weight="normal" text-anchor="middle" >February</text>
<text x="1403.5" y="642.7" font-size="11" fill="#444" font-weight="normal" text-anchor="middle" >Wed 03</text>
<path d="M14.5,780 V667.5 A4,4 0 0 1 18.5,663.5 H1440 V780" fill="#fff" stroke="#cdcdcd" stroke-width="1" />
<line x1="15" y1="691.5" x2="1436" y2="691.5" stroke="#e0e0e0" stroke-width="1" />
<line x1="15" y1="718.5" x2="1436" y2="718.5" stroke="#e0e0e0" stroke-width="1" />
<line x1="15" y1="745.5" x2="1436" y2="745.5" stroke="#e0e0e0" stroke-width="1" />
<line x1="15" y1="772.5" x2="1436" y2="772.5" stroke="#e0e0e0" stroke-width="1" />
<line x1="56.5" y1="691.5" x2="56.5" y2="774" stroke="#e0e0e0" stroke-width="1" />
<line x1="81.5" y1="691.5" x2="81.5" y2="774" stroke="#e0e0e0" stroke-width="1" />
<line x1="106.5" y1="691.5" x2="106.5" y2="774" stroke="#e0e0e0" stroke-width="1" />
<line x1="126.5" y1="691.5" x2="126.5" y2="774" stroke="#e0e0e0" stroke-width="1" />
<line x1="416.5" y1="691.5" x2="416.5" y2="774" stroke="#e0e0e0" stroke-width="1" />
<line x1="958.5" y1="691.5" x2="958.5" y2="774" stroke="#e0e0e0" stroke-width="1" />
<line x1="1100.5" y1="691.5" x2="1100.5" y2="774" stroke="#e0e0e0" stroke-width="1" />
<line x1="1180.5" y1="691.5" x2="1180.5" y2="774" stroke="#e0e0e0" stroke-width="1" />
<line x1="1276.5" y1="691.5" x2="1276.5" y2="774" stroke="#e0e0e0" stroke-width="1" />
<line x1="1372.5" y1="691.5" x2="1372.5" y2="774" stroke="#e0e0e0" stroke-width="1" />
<line x1="1394.5" y1="691.5" x2="1394.5" y2="774" stroke="#e0e0e0" stroke-width="1" />
<line x1="1416.5" y1="691.5" x2="1416.5" y2="774" stroke="#e0e0e0" stroke-width="1" />
<text x="20.2" y="681.9" font-size="11.2" fill="#444" font-weight="normal" text-anchor="start" textLength="29.8" lengthAdjust="spacingAndGlyphs" >Y-Axis</text>
<text x="131.5" y="681.9" font-size="11.2" fill="#444" font-weight="normal" text-anchor="start" textLength="28.2" lengthAdjust="spacingAndGlyphs" >Name</text>
<text x="421.2" y="681.9" font-size="11.2" fill="#444" font-weight="normal" text-anchor="start" textLength="54.8" lengthAdjust="spacingAndGlyphs" >Description</text>
<text x="971.1" y="681.9" font-size="11.2" fill="#444" font-weight="normal" text-anchor="start" textLength="39.2" lengthAdjust="spacingAndGlyphs" >Average</text>
<path d="M1082.9,676.3 H1089.2 L1086.05,681.3 Z" fill="#333" stroke="none" stroke-width="1" />
<text x="1105.1" y="681.9" font-size="11.2" fill="#444" font-weight="normal" text-anchor="start" textLength="25.6" lengthAdjust="spacingAndGlyphs" >Units</text>
<text x="1185.3" y="681.9" font-size="11.2" fill="#444" font-weight="normal" text-anchor="start" textLength="17.5" lengthAdjust="spacingAndGlyphs" >Min</text>
<text x="1281.3" y="681.9" font-size="11.2" fill="#444" font-weight="normal" text-anchor="start" textLength="20.2" lengthAdjust="spacingAndGlyphs" >Max</text>
<rect x="16.9" y="698.2" width="19" height="13.5" fill="#bddfef" stroke="none" stroke-width="1" rx="0" />
<text x="24.2" y="709.0" font-size="9.4" fill="#222" font-weight="normal" text-anchor="start" stroke="#222" stroke-width="0.25">L</text>
<text x="42.3" y="709.0" font-size="9.4" fill="#333" font-weight="normal" text-anchor="start" >R</text>
<rect x="60.1" y="696.1" width="17.9" height="17.6" fill="#800000" stroke="none" stroke-width="1" rx="0" />
<path d="M84.9,711.6 L90,704.5 L93.6,708.3 L101.2,699.7" fill="none" stroke="#111" stroke-width="1.4" stroke-linejoin="round"/>
<rect x="109.9" y="698.9" width="13.2" height="13.1" fill="#6e6e6e" stroke="none" stroke-width="1" rx="1.5" />
<path d="M112.6,705.7 L115.4,708.7 L120.6,702.1" fill="none" stroke="#fff" stroke-width="1.9" />
<rect x="131" y="694.1" width="219.4" height="20.4" fill="#fff" stroke="#c8c8c8" stroke-width="1" rx="4" />
<line x1="333.4" y1="694.1" x2="333.4" y2="714.5" stroke="#c8c8c8" stroke-width="1" />
<path d="M137.4,703.4 L145,700.7" fill="none" stroke="#3ab0ee" stroke-width="1.9" />
<path d="M139.6,703.1 L141.9,702.5 L143.2,709.7 L139.9,709.7 Z" fill="#1fa5ee" stroke="none" stroke-width="1" />
<ellipse cx="145.9" cy="704.1" rx="1.15" ry="4.6" fill="#45b3ef"/>
<rect x="137" y="707.1" width="1.8" height="2.4" fill="#92c872" stroke="none" stroke-width="1" rx="0" />
<rect x="136" y="709.7" width="11.8" height="1.3" fill="#92c872" stroke="none" stroke-width="1" rx="0" />
<text x="149.2" y="709.1" font-size="11.2" fill="#333" font-weight="normal" text-anchor="start" textLength="103.9" lengthAdjust="spacingAndGlyphs" >Beardy Display_Name</text>
<path d="M257.3,705.9 H265.4" fill="none" stroke="#333" stroke-width="1.1" />
<path d="M263.2,704.1 L266.4,705.9 L263.2,707.7 Z" fill="#333" stroke="none" stroke-width="1" />
<text x="269.6" y="709.1" font-size="11.2" fill="#333" font-weight="normal" text-anchor="start" textLength="61.0" lengthAdjust="spacingAndGlyphs" >Oil Produci...</text>
<path d="M338.6,703.2 L343.8,708.0 M343.8,703.2 L338.6,708.0" fill="none" stroke="#555" stroke-width="0.9" />
<circle cx="362.4" cy="705.3" r="6.4" fill="#6a6a6a"/>
<circle cx="362.5" cy="702.1" r="1.2" fill="#fff"/>
<path d="M360.8,704.1 H363.6 V708.1 H364.8 V709.5 H360.4 V708.1 H361.6 V705.4 H360.8 Z" fill="#fff" stroke="none" stroke-width="1" />
<path d="M376,712.1 L376.8,708.3 L385.5,699.6 L389.1,703.2 L380.4,711.9 Z" fill="#6a6a6a" stroke="none" stroke-width="1" />
<path d="M377.2,710.8 L378,708.7 L379.3,710.1 Z" fill="#fff" stroke="none" stroke-width="1" />
<line x1="383.8" y1="701.3" x2="387.4" y2="704.9" stroke="#fff" stroke-width="0.7" />
<text x="396.5" y="710.0" font-size="14" fill="#555" font-weight="normal" text-anchor="start" textLength="13.4" lengthAdjust="spacingAndGlyphs" font-style="italic" font-family="Liberation Serif, serif">fx</text>
<text x="425.4" y="708.9" font-size="11.2" fill="#3a3a3a" font-weight="normal" text-anchor="start" textLength="76.5" lengthAdjust="spacingAndGlyphs" >Fixed limit of 80</text>
<text x="962.2" y="708.9" font-size="11.2" fill="#333" font-weight="normal" text-anchor="start" textLength="26.0" lengthAdjust="spacingAndGlyphs" >80.00</text>
<path d="M1164.5,704.0 H1171.4 L1168,709.0 Z" fill="#333" stroke="none" stroke-width="1" />
<path d="M1265.2,700.7 L1271.8,706.7 M1271.8,700.7 L1265.2,706.7" fill="none" stroke="#111" stroke-width="2" />
<path d="M1361.2,700.7 L1367.8,706.7 M1367.8,700.7 L1361.2,706.7" fill="none" stroke="#111" stroke-width="2" />
<path d="M1383.7,701.0 V709.0" fill="none" stroke="#111" stroke-width="1.3" />
<path d="M1381.6,702.1 L1383.7,699.8 L1385.8,702.1 Z M1381.6,707.9 L1383.7,710.2 L1385.8,707.9 Z" fill="#111" stroke="none" stroke-width="1" />
<rect x="1422.5" y="702.3" width="8.8" height="9.2" fill="none" stroke="#555" stroke-width="1.1" rx="1" />
<line x1="1421.5" y1="701.5" x2="1433" y2="701.5" stroke="#555" stroke-width="1.2" />
<path d="M1425,701.1 V699.7 H1428.8 V701.1" fill="none" stroke="#555" stroke-width="1" />
<line x1="1425" y1="704.1" x2="1425" y2="710.1" stroke="#666" stroke-width="0.7" />
<line x1="1426.6" y1="704.1" x2="1426.6" y2="710.1" stroke="#666" stroke-width="0.7" />
<line x1="1428.2" y1="704.1" x2="1428.2" y2="710.1" stroke="#666" stroke-width="0.7" />
<line x1="1429.6" y1="704.1" x2="1429.6" y2="710.1" stroke="#666" stroke-width="0.7" />
<rect x="16.9" y="725.2" width="19" height="13.5" fill="#bddfef" stroke="none" stroke-width="1" rx="0" />
<text x="24.2" y="736.0" font-size="9.4" fill="#222" font-weight="normal" text-anchor="start" stroke="#222" stroke-width="0.25">L</text>
<text x="42.3" y="736.0" font-size="9.4" fill="#333" font-weight="normal" text-anchor="start" >R</text>
<rect x="60.1" y="723.1" width="17.9" height="17.6" fill="#2a7f93" stroke="none" stroke-width="1" rx="0" />
<path d="M84.9,738.6 L90,731.5 L93.6,735.3 L101.2,726.7" fill="none" stroke="#111" stroke-width="1.4" stroke-linejoin="round"/>
<rect x="109.9" y="725.9" width="13.2" height="13.1" fill="#6e6e6e" stroke="none" stroke-width="1" rx="1.5" />
<path d="M112.6,732.7 L115.4,735.7 L120.6,729.1" fill="none" stroke="#fff" stroke-width="1.9" />
<rect x="131" y="721.1" width="219.4" height="20.4" fill="#fff" stroke="#c8c8c8" stroke-width="1" rx="4" />
<line x1="333.4" y1="721.1" x2="333.4" y2="741.5" stroke="#c8c8c8" stroke-width="1" />
<path d="M137.4,730.4 L145,727.7" fill="none" stroke="#3ab0ee" stroke-width="1.9" />
<path d="M139.6,730.1 L141.9,729.5 L143.2,736.7 L139.9,736.7 Z" fill="#1fa5ee" stroke="none" stroke-width="1" />
<ellipse cx="145.9" cy="731.1" rx="1.15" ry="4.6" fill="#45b3ef"/>
<rect x="137" y="734.1" width="1.8" height="2.4" fill="#92c872" stroke="none" stroke-width="1" rx="0" />
<rect x="136" y="736.7" width="11.8" height="1.3" fill="#92c872" stroke="none" stroke-width="1" rx="0" />
<text x="149.2" y="736.1" font-size="11.2" fill="#333" font-weight="normal" text-anchor="start" textLength="103.9" lengthAdjust="spacingAndGlyphs" >Beardy Display_Name</text>
<path d="M257.3,732.9 H265.4" fill="none" stroke="#333" stroke-width="1.1" />
<path d="M263.2,731.1 L266.4,732.9 L263.2,734.7 Z" fill="#333" stroke="none" stroke-width="1" />
<text x="269.6" y="736.1" font-size="11.2" fill="#333" font-weight="normal" text-anchor="start" textLength="61.0" lengthAdjust="spacingAndGlyphs" >Oil Produci...</text>
<path d="M338.6,730.2 L343.8,735.0 M343.8,730.2 L338.6,735.0" fill="none" stroke="#555" stroke-width="0.9" />
<circle cx="362.4" cy="732.3" r="6.4" fill="#6a6a6a"/>
<circle cx="362.5" cy="729.1" r="1.2" fill="#fff"/>
<path d="M360.8,731.1 H363.6 V735.1 H364.8 V736.5 H360.4 V735.1 H361.6 V732.4 H360.8 Z" fill="#fff" stroke="none" stroke-width="1" />
<path d="M376,739.1 L376.8,735.3 L385.5,726.6 L389.1,730.2 L380.4,738.9 Z" fill="#6a6a6a" stroke="none" stroke-width="1" />
<path d="M377.2,737.8 L378,735.7 L379.3,737.1 Z" fill="#fff" stroke="none" stroke-width="1" />
<line x1="383.8" y1="728.3" x2="387.4" y2="731.9" stroke="#fff" stroke-width="0.7" />
<text x="396.5" y="737.0" font-size="14" fill="#555" font-weight="normal" text-anchor="start" textLength="13.4" lengthAdjust="spacingAndGlyphs" font-style="italic" font-family="Liberation Serif, serif">fx</text>
<text x="425.4" y="735.9" font-size="11.2" fill="#3a3a3a" font-weight="normal" text-anchor="start" textLength="124.8" lengthAdjust="spacingAndGlyphs" >Randomly generated data</text>
<text x="962.2" y="735.9" font-size="11.2" fill="#333" font-weight="normal" text-anchor="start" textLength="25.7" lengthAdjust="spacingAndGlyphs" >64.10</text>
<path d="M1164.5,731.0 H1171.4 L1168,736.0 Z" fill="#333" stroke="none" stroke-width="1" />
<path d="M1265.2,727.7 L1271.8,733.7 M1271.8,727.7 L1265.2,733.7" fill="none" stroke="#111" stroke-width="2" />
<path d="M1361.2,727.7 L1367.8,733.7 M1367.8,727.7 L1361.2,733.7" fill="none" stroke="#111" stroke-width="2" />
<path d="M1383.7,728.0 V736.0" fill="none" stroke="#111" stroke-width="1.3" />
<path d="M1381.6,729.1 L1383.7,726.8 L1385.8,729.1 Z M1381.6,734.9 L1383.7,737.2 L1385.8,734.9 Z" fill="#111" stroke="none" stroke-width="1" />
<rect x="1422.5" y="729.3" width="8.8" height="9.2" fill="none" stroke="#555" stroke-width="1.1" rx="1" />
<line x1="1421.5" y1="728.5" x2="1433" y2="728.5" stroke="#555" stroke-width="1.2" />
<path d="M1425,728.1 V726.7 H1428.8 V728.1" fill="none" stroke="#555" stroke-width="1" />
<line x1="1425" y1="731.1" x2="1425" y2="737.1" stroke="#666" stroke-width="0.7" />
<line x1="1426.6" y1="731.1" x2="1426.6" y2="737.1" stroke="#666" stroke-width="0.7" />
<line x1="1428.2" y1="731.1" x2="1428.2" y2="737.1" stroke="#666" stroke-width="0.7" />
<line x1="1429.6" y1="731.1" x2="1429.6" y2="737.1" stroke="#666" stroke-width="0.7" />
<rect x="16.9" y="752.2" width="19" height="13.5" fill="#bddfef" stroke="none" stroke-width="1" rx="0" />
<text x="24.2" y="763.0" font-size="9.4" fill="#222" font-weight="normal" text-anchor="start" stroke="#222" stroke-width="0.25">L</text>
<text x="42.3" y="763.0" font-size="9.4" fill="#333" font-weight="normal" text-anchor="start" >R</text>
<rect x="60.1" y="750.1" width="17.9" height="17.6" fill="#e016fb" stroke="none" stroke-width="1" rx="0" />
<path d="M84.9,765.6 L90,758.5 L93.6,762.3 L101.2,753.7" fill="none" stroke="#111" stroke-width="1.4" stroke-linejoin="round"/>
<rect x="109.9" y="752.9" width="13.2" height="13.1" fill="#6e6e6e" stroke="none" stroke-width="1" rx="1.5" />
<path d="M112.6,759.7 L115.4,762.7 L120.6,756.1" fill="none" stroke="#fff" stroke-width="1.9" />
<rect x="131" y="748.1" width="102.5" height="20.4" fill="#fff" stroke="#c8c8c8" stroke-width="1" rx="4" />
<line x1="217.8" y1="748.1" x2="217.8" y2="768.5" stroke="#c8c8c8" stroke-width="1" />
<path d="M136.8,754.0 L137.6,753.4 H141.8 L147.2,758.8 L142.8,762.8 L137,757.1 Z" fill="#111" stroke="none" stroke-width="1" />
<circle cx="139.4" cy="755.7" r="0.9" fill="#fff"/>
<text x="148.9" y="763.1" font-size="11.2" fill="#333" font-weight="normal" text-anchor="start" textLength="65.4" lengthAdjust="spacingAndGlyphs" >015A_BEN.PV</text>
<path d="M224,757.2 L229.2,762.0 M229.2,757.2 L224,762.0" fill="none" stroke="#555" stroke-width="0.9" />
<circle cx="362.4" cy="759.3" r="6.4" fill="#6a6a6a"/>
<circle cx="362.5" cy="756.1" r="1.2" fill="#fff"/>
<path d="M360.8,758.1 H363.6 V762.1 H364.8 V763.5 H360.4 V762.1 H361.6 V759.4 H360.8 Z" fill="#fff" stroke="none" stroke-width="1" />
<path d="M376,766.1 L376.8,762.3 L385.5,753.6 L389.1,757.2 L380.4,765.9 Z" fill="#6a6a6a" stroke="none" stroke-width="1" />
<path d="M377.2,764.8 L378,762.7 L379.3,764.1 Z" fill="#fff" stroke="none" stroke-width="1" />
<line x1="383.8" y1="755.3" x2="387.4" y2="758.9" stroke="#fff" stroke-width="0.7" />
<text x="396.5" y="764.0" font-size="14" fill="#555" font-weight="normal" text-anchor="start" textLength="13.4" lengthAdjust="spacingAndGlyphs" font-style="italic" font-family="Liberation Serif, serif">fx</text>
<text x="425.4" y="762.9" font-size="11.2" fill="#3a3a3a" font-weight="normal" text-anchor="start" textLength="130.6" lengthAdjust="spacingAndGlyphs" >015 ATMOS MVC BENEFITS</text>
<text x="962.2" y="762.9" font-size="11.2" fill="#333" font-weight="normal" text-anchor="start" textLength="31.3" lengthAdjust="spacingAndGlyphs" >913.13</text>
<path d="M1164.5,758.0 H1171.4 L1168,763.0 Z" fill="#333" stroke="none" stroke-width="1" />
<path d="M1265.2,754.7 L1271.8,760.7 M1271.8,754.7 L1265.2,760.7" fill="none" stroke="#111" stroke-width="2" />
<path d="M1361.2,754.7 L1367.8,760.7 M1367.8,754.7 L1361.2,760.7" fill="none" stroke="#111" stroke-width="2" />
<path d="M1383.7,755.0 V763.0" fill="none" stroke="#111" stroke-width="1.3" />
<path d="M1381.6,756.1 L1383.7,753.8 L1385.8,756.1 Z M1381.6,761.9 L1383.7,764.2 L1385.8,761.9 Z" fill="#111" stroke="none" stroke-width="1" />
<rect x="1422.5" y="756.3" width="8.8" height="9.2" fill="none" stroke="#555" stroke-width="1.1" rx="1" />
<line x1="1421.5" y1="755.5" x2="1433" y2="755.5" stroke="#555" stroke-width="1.2" />
<path d="M1425,755.1 V753.7 H1428.8 V755.1" fill="none" stroke="#555" stroke-width="1" />
<line x1="1425" y1="758.1" x2="1425" y2="764.1" stroke="#666" stroke-width="0.7" />
<line x1="1426.6" y1="758.1" x2="1426.6" y2="764.1" stroke="#666" stroke-width="0.7" />
<line x1="1428.2" y1="758.1" x2="1428.2" y2="764.1" stroke="#666" stroke-width="0.7" />
<line x1="1429.6" y1="758.1" x2="1429.6" y2="764.1" stroke="#666" stroke-width="0.7" />
<text x="1188.5" y="762.9" font-size="11.2" fill="#333" font-weight="normal" text-anchor="start" >0</text>
<text x="1285.2" y="762.9" font-size="11.2" fill="#333" font-weight="normal" text-anchor="start" textLength="22.5" lengthAdjust="spacingAndGlyphs" >1000</text>
</svg></body></html>
